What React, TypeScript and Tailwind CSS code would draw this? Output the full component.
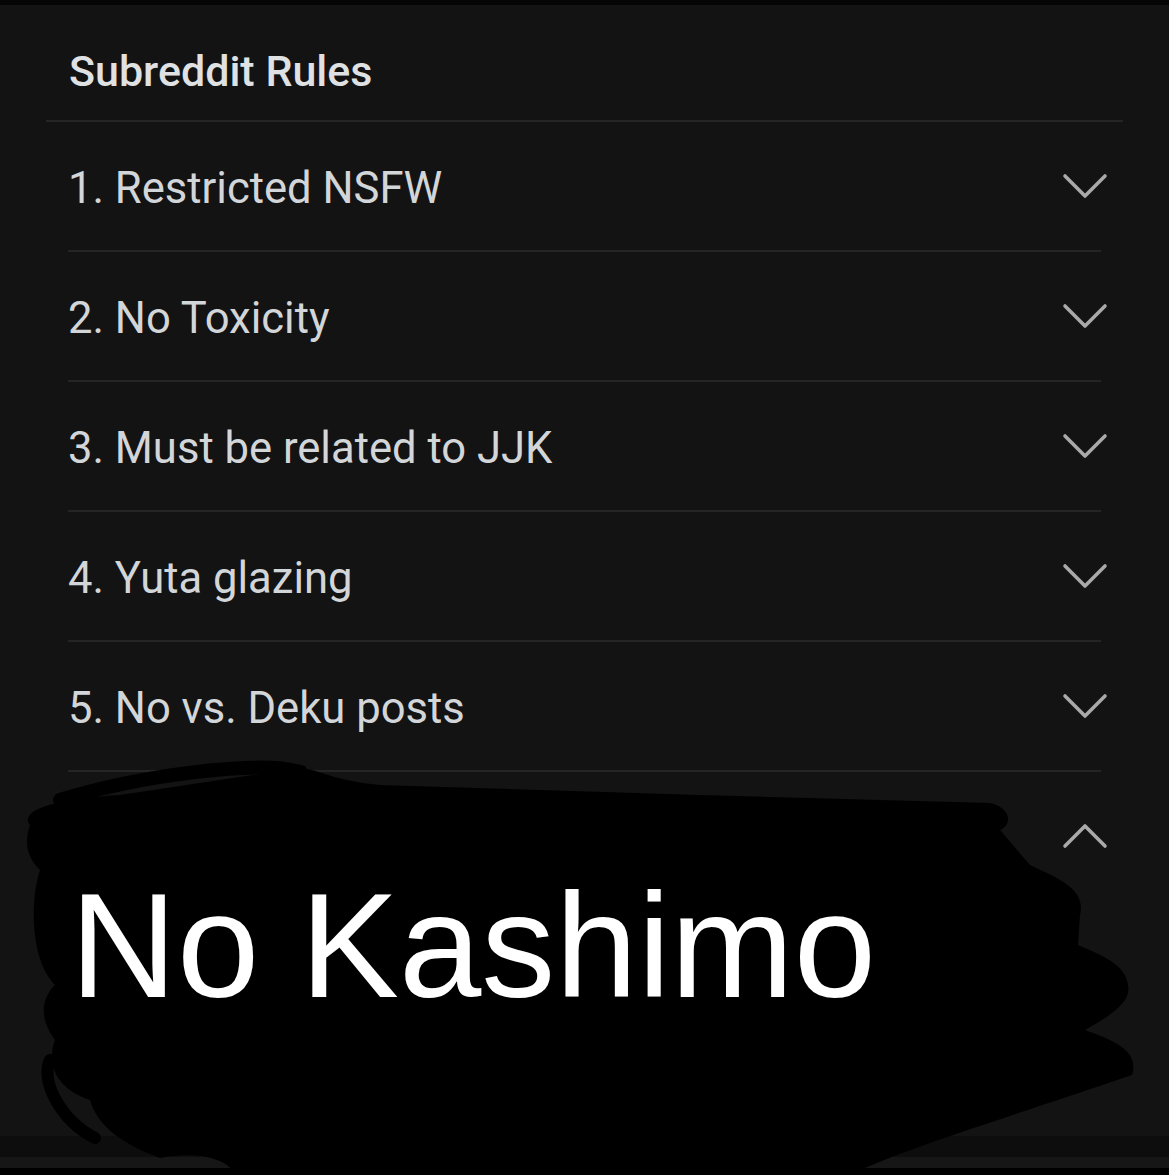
const rules = [
  '1. Restricted NSFW',
  '2. No Toxicity',
  '3. Must be related to JJK',
  '4. Yuta glazing',
  '5. No vs. Deku posts',
];

const Chevron = ({ up = false }: { up?: boolean }) => (
  <svg width="48" height="28" viewBox="0 0 48 28" className="mr-[-8px] shrink-0">
    <polyline
      points={up ? '4,24 24,4 44,24' : '4,4 24,24 44,4'}
      fill="none"
      stroke="#a9a9a9"
      strokeWidth="3.6"
      strokeLinecap="round"
      strokeLinejoin="round"
    />
  </svg>
);

const RuleRow = ({ title, open = false }: { title: string; open?: boolean }) => (
  <div className="flex h-[128px] items-center justify-between pt-[5px]">
    <span className="text-[43.6px] leading-none text-[#d3d6d9]">{title}</span>
    <div className="mt-[-5px]">
      <Chevron up={open} />
    </div>
  </div>
);

const Scribble = () => (
  <svg
    width="1169"
    height="1175"
    viewBox="0 0 1169 1175"
    className="pointer-events-none absolute left-0 top-0"
  >
    <path
      fill="#000"
      d="M30 825 C20 812 45 800 120 795 L300 768 C322 770 330 780 380 785 L700 795 L990 803 C1012 808 1012 825 1000 830 L1030 865 C1062 880 1086 890 1080 915 L1078 945 C1102 955 1126 965 1128 985 C1132 1002 1110 1016 1085 1030 C1112 1040 1140 1050 1132 1075 C1000 1120 900 1150 850 1175 L235 1175 C230 1160 200 1150 160 1158 C112 1140 96 1120 90 1100 C60 1090 45 1068 55 1040 C40 1020 40 1000 55 985 C30 960 30 900 40 870 C25 855 25 840 30 825 Z"
    />
    <path
      d="M60 800 C140 775 260 760 300 772 C305 790 300 805 290 800"
      fill="none"
      stroke="#000"
      strokeWidth="14"
      strokeLinecap="round"
    />
    <path
      d="M50 1060 C40 1080 60 1120 95 1138"
      fill="none"
      stroke="#000"
      strokeWidth="12"
      strokeLinecap="round"
    />
  </svg>
);

export default function App() {
  return (
    <div className="relative h-[1175px] w-[1169px] overflow-hidden bg-black font-['Roboto',sans-serif]">
      <div className="h-[5px] bg-[#050505]" />
      <div className="flex h-[1131px] flex-col bg-[#131313]">
        <div className="mx-[46px] border-b-2 border-[#252525] pl-[23px] pt-[45px] pb-[27px]">
          <h2 className="text-[43px] font-medium leading-none text-[#dfe1e3]">Subreddit Rules</h2>
        </div>
        <div className="mx-[68px] flex flex-col">
          {rules.map((r) => (
            <div key={r} className="border-b-2 border-[#252525]">
              <RuleRow title={r} />
            </div>
          ))}
          <RuleRow title="" open />
        </div>
      </div>
      <div className="h-[21px] bg-[#0d0d0d]" />
      <div className="h-[11px] bg-[#161616]" />

      <Scribble />
      <div className="absolute left-[70px] top-[872px] font-['Liberation_Sans',Arial,sans-serif] text-[148px] leading-none text-white">
        No Kashimo
      </div>
    </div>
  );
}
